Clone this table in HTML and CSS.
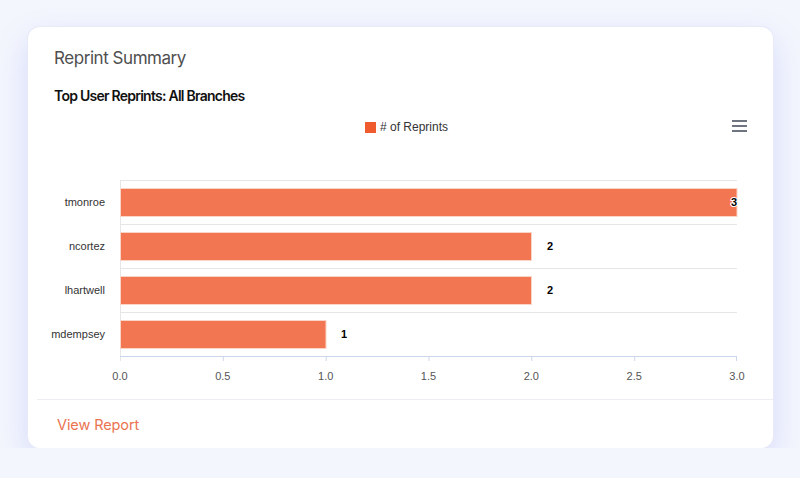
FILE: index.html
```html
<!DOCTYPE html>
<html lang="en">
<head>
<meta charset="utf-8">
<title>Reprint Summary</title>
<link rel="stylesheet" href="styles.css">
</head>
<body>
<div class="page">
  <section class="card">
    <h2 class="card-title">Reprint Summary</h2>
    <h3 class="chart-title">Top User Reprints: All Branches</h3>
    <svg class="chart" width="745" height="289" viewBox="0 0 745 289" xmlns="http://www.w3.org/2000/svg">
      <!-- legend -->
      <rect x="337" y="12" width="11" height="11" fill="#f05b2e"/>
      <text class="legend-text" x="352" y="21"># of Reprints</text>
      <!-- menu -->
      <g stroke="#6e7480" stroke-width="2">
        <line x1="704" y1="11" x2="719" y2="11"/>
        <line x1="704" y1="16" x2="719" y2="16"/>
        <line x1="704" y1="21" x2="719" y2="21"/>
      </g>
      <!-- grid -->
      <g stroke="#e6e6e6" stroke-width="1">
        <line x1="92" y1="70.5" x2="709" y2="70.5"/>
        <line x1="92" y1="114.5" x2="709" y2="114.5"/>
        <line x1="92" y1="158.5" x2="709" y2="158.5"/>
        <line x1="92" y1="202.5" x2="709" y2="202.5"/>
        <line x1="92.5" y1="70" x2="92.5" y2="251"/>
      </g>
      <line x1="92" y1="246.5" x2="709" y2="246.5" stroke="#ccd6eb"/>
      <g stroke="#ccd6eb" stroke-width="1">
        <line x1="195.3" y1="246" x2="195.3" y2="251"/>
        <line x1="298.2" y1="246" x2="298.2" y2="251"/>
        <line x1="401" y1="246" x2="401" y2="251"/>
        <line x1="503.8" y1="246" x2="503.8" y2="251"/>
        <line x1="606.7" y1="246" x2="606.7" y2="251"/>
        <line x1="708.5" y1="246" x2="708.5" y2="251"/>
      </g>
      <!-- bars -->
      <g fill="#f37652" stroke="#fbd4c8" stroke-width="1">
        <rect x="92.5" y="78.5" width="616.5" height="28"/>
        <rect x="92.5" y="122.5" width="411" height="28"/>
        <rect x="92.5" y="166.5" width="411" height="28"/>
        <rect x="92.5" y="210.5" width="205.5" height="28"/>
      </g>
      <!-- category labels -->
      <g class="cat-label" text-anchor="end">
        <text x="77" y="96">tmonroe</text>
        <text x="77" y="140">ncortez</text>
        <text x="77" y="184">lhartwell</text>
        <text x="77" y="228">mdempsey</text>
      </g>
      <!-- value axis labels -->
      <g class="axis-label" text-anchor="middle">
        <text x="92" y="270">0.0</text>
        <text x="194.8" y="270">0.5</text>
        <text x="297.7" y="270">1.0</text>
        <text x="400.5" y="270">1.5</text>
        <text x="503.3" y="270">2.0</text>
        <text x="606.2" y="270">2.5</text>
        <text x="709" y="270">3.0</text>
      </g>
      <!-- data labels -->
      <g class="data-label">
        <text x="709" y="96" text-anchor="end">3</text>
        <text x="519" y="140">2</text>
        <text x="519" y="184">2</text>
        <text x="313" y="228">1</text>
      </g>
    </svg>
    <footer class="card-footer">
      <a class="view-link" href="#">View Report</a>
    </footer>
  </section>
</div>
</body>
</html>
```
FILE: styles.css
```css
* { box-sizing: border-box; }
html, body {
  margin: 0;
  padding: 0;
  background: #f4f6fd;
}
.page {
  padding: 27px 27px 0 28px;
}
.card {
  width: 745px;
  height: 421px;
  background: #ffffff;
  border-radius: 12px;
  box-shadow: 0 0 0 1px #e7eaf7, 0 12px 32px rgba(100, 120, 240, 0.22);
  display: flex;
  flex-direction: column;
  overflow: hidden;
}
.card-title {
  margin: 0;
  padding: 20px 26px 0;
  font-family: Inter, "Noto Sans", sans-serif;
  font-weight: 400;
  font-size: 17px;
  line-height: 23px;
  color: #4f4f4f;
  letter-spacing: -0.45px;
}
.chart-title {
  margin: 16px 0 0;
  padding: 0 26px;
  font-family: Inter, "Noto Sans", sans-serif;
  font-weight: 600;
  font-size: 14px;
  line-height: 20px;
  color: #111111;
  letter-spacing: -0.75px;
}
.chart {
  display: block;
  margin-top: 4px;
  flex: none;
}
.legend-text {
  font-family: "Liberation Sans", Arial, sans-serif;
  font-size: 12px;
  fill: #333333;
}
.cat-label text {
  font-family: "Liberation Sans", Arial, sans-serif;
  font-size: 11px;
  fill: #333333;
}
.axis-label text {
  font-family: "Liberation Sans", Arial, sans-serif;
  font-size: 11px;
  fill: #555555;
}
.data-label text {
  font-family: "Liberation Sans", Arial, sans-serif;
  font-size: 11px;
  font-weight: 700;
  fill: #000000;
  stroke: #ffffff;
  stroke-width: 2px;
  paint-order: stroke;
  stroke-linejoin: round;
}
.card-footer {
  margin-left: 9px;
  border-top: 1px solid #eceef4;
  padding: 14px 20px 0;
  flex: 1;
}
.view-link {
  font-family: Inter, "Noto Sans", sans-serif;
  font-size: 14.5px;
  line-height: 22px;
  color: #ea7350;
  text-decoration: none;
  letter-spacing: -0.1px;
}
```
